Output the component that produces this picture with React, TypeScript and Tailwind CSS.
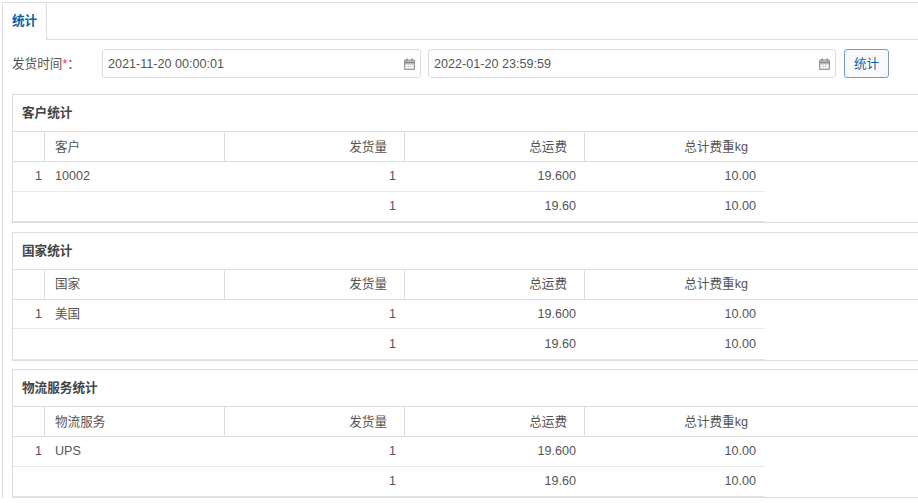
const stack = "font-['Liberation_Sans','Noto_Sans_CJK_SC',sans-serif]";

const sections = [
  { title: '客户统计', column: '客户', name: '10002' },
  { title: '国家统计', column: '国家', name: '美国' },
  { title: '物流服务统计', column: '物流服务', name: 'UPS' },
];

const CalendarIcon = () => (
  <svg width="11" height="12" viewBox="0 0 11 12" className="shrink-0">
    <path d="M0.5 2H10.5V11.5H0.5Z" fill="#c9c9c9" stroke="#999" />
    <path d="M0 4.5H11" stroke="#888" strokeWidth="1.5" />
    <path d="M3 6V11M5.5 6V11M8 6V11M1 7.5H10M1 9.5H10" stroke="#fff" strokeWidth="0.8" />
    <path d="M3 0.5V3M8 0.5V3" stroke="#888" strokeWidth="1.4" />
  </svg>
);

const DateInput = ({ value, className }: { value: string; className: string }) => (
  <div className={`flex h-full items-center justify-between rounded-[3px] border border-[#ddd] bg-white pl-[5px] pr-[5px] ${className}`}>
    <span>{value}</span>
    <CalendarIcon />
  </div>
);

const StatPanel = ({ title, column, name }: { title: string; column: string; name: string }) => (
  <div className="mb-[8.5px] w-[1000px] border border-[#ddd] border-b-0">
    <div className="flex h-[36px] items-center pl-[9px] font-bold text-[#444]">{title}</div>
    <div className="grid h-[31px] grid-cols-[32px_180px_180px_180px_auto] border-t border-[#ddd] border-b">
      <div className="border-r border-[#ddd]" />
      <div className="flex items-center border-r border-[#ddd] pl-[10px]">{column}</div>
      <div className="flex items-center justify-end border-r border-[#ddd] pr-[17px]">发货量</div>
      <div className="flex items-center justify-end border-r border-[#ddd] pr-[17px]">总运费</div>
      <div className="flex w-[180px] items-center justify-end pr-[17px]">总计费重kg</div>
    </div>
    <div className="w-[752px]">
      <div className="grid h-[29.5px] grid-cols-[32px_180px_180px_180px_180px] items-center border-b border-[#e8e8e8]">
        <div className="pr-[3px] text-right">1</div>
        <div className="pl-[10px]">{name}</div>
        <div className="pr-[9px] text-right">1</div>
        <div className="pr-[9px] text-right">19.600</div>
        <div className="pr-[9px] text-right">10.00</div>
      </div>
      <div className="grid h-[29.5px] grid-cols-[32px_180px_180px_180px_180px] items-center">
        <div />
        <div />
        <div className="pr-[9px] text-right">1</div>
        <div className="pr-[9px] text-right">19.60</div>
        <div className="pr-[9px] text-right">10.00</div>
      </div>
    </div>
    <div className="h-[2px] border-b border-[#ddd]">
      <div className="h-px w-[752px] bg-[#e4e4e4]" />
    </div>
  </div>
);

export default function App() {
  return (
    <div className={`h-[503px] w-[918px] overflow-hidden bg-white text-[12.6px] leading-[18px] text-[#555] ${stack}`}>
      <div className="ml-[2px] mt-[2px] w-[1000px] border-l border-t border-[#ddd]">
        <div className="flex h-[37px] border-b border-[#ddd]">
          <div className="-mb-px flex w-[44px] items-center rounded-tr-[3px] border-r border-[#ddd] bg-white pb-[1px] pl-[9px] font-bold text-[#0b62a4]">
            统计
          </div>
        </div>
        <div className="mt-[9px] flex h-[29px] items-center pl-[9px]">
          <div className="w-[90px]">
            发货时间<span className="text-[#f33]">*</span>：
          </div>
          <DateInput value="2021-11-20 00:00:01" className="w-[319px]" />
          <DateInput value="2022-01-20 23:59:59" className="ml-[7px] w-[408px]" />
          <button className="ml-[8px] h-full w-[45px] rounded-[3px] border border-[#6d9fca] bg-[#f9f9f9] text-[#0b62a4]">
            统计
          </button>
        </div>
        <div className="ml-[9px] mt-[16px]">
          {sections.map((s) => (
            <StatPanel key={s.title} title={s.title} column={s.column} name={s.name} />
          ))}
        </div>
      </div>
    </div>
  );
}
